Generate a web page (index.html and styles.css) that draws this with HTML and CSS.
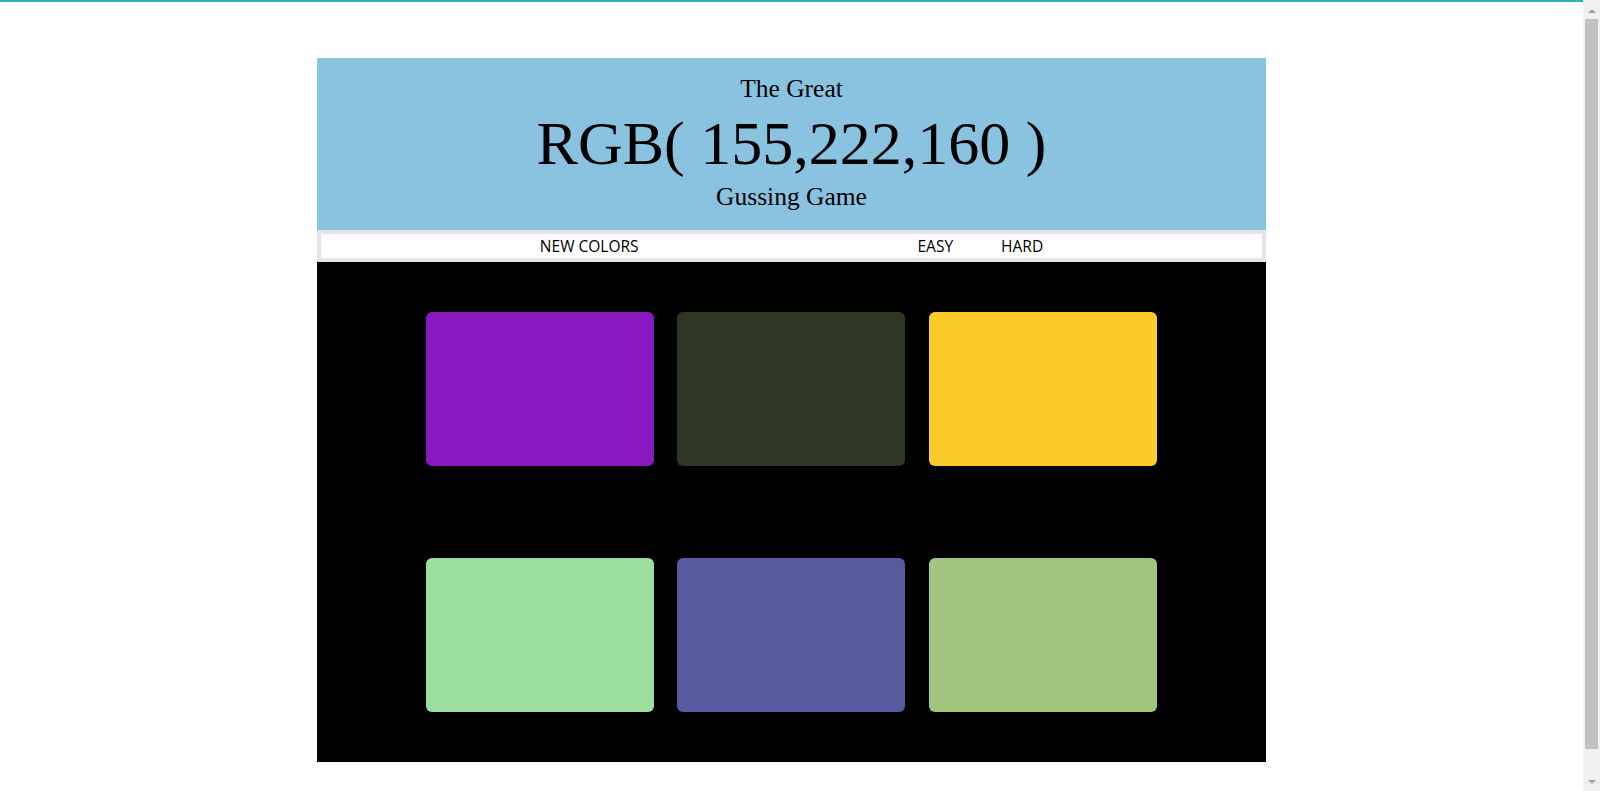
FILE: index.html
```html
<!DOCTYPE html>
<html lang="en">
<head>
<meta charset="utf-8">
<title>The Great RGB Gussing Game</title>
<link rel="stylesheet" href="styles.css">
</head>
<body>
<div class="game">
  <h1 class="header">
    <span class="line-small top">The Great</span>
    <span class="line-big">RGB( 155,222,160 )</span>
    <span class="line-small bottom">Gussing Game</span>
  </h1>
  <div class="stripe">
    <div class="stripe-group">
      <button class="btn">NEW COLORS</button>
      <span class="message"></span>
      <button class="btn">EASY</button>
      <button class="btn">HARD</button>
    </div>
  </div>
  <div class="board">
    <div class="square sq-purple"></div>
    <div class="square sq-dark"></div>
    <div class="square sq-yellow"></div>
    <div class="square sq-light"></div>
    <div class="square sq-indigo"></div>
    <div class="square sq-olive"></div>
  </div>
</div>
<div class="scrollbar" aria-hidden="true">
  <span class="arrow arrow-up"></span>
  <span class="thumb"></span>
  <span class="arrow arrow-down"></span>
</div>
</body>
</html>
```

FILE: styles.css
```css
html, body {
  margin: 0;
  padding: 0;
  background: #ffffff;
}
body {
  border-top: 2px solid #2bb3b8;
  margin-right: 17px;
}
.game {
  width: 60%;
  margin: 56px auto 58px;
}
.header {
  margin: 0;
  height: 172px;
  box-sizing: border-box;
  padding-top: 16px;
  background: #8ac3e0;
  color: #000;
  font-family: "Liberation Serif", "Times New Roman", serif;
  font-weight: normal;
  text-align: center;
}
.line-small {
  display: block;
  font-size: 25.5px;
  line-height: 30px;
}
.line-big {
  display: block;
  font-size: 62px;
  line-height: 79px;
}
.line-small.bottom {
  line-height: 27px;
}
.stripe {
  border: 4px solid #e4e4e9;
  background: #ffffff;
  height: 24px;
  display: flex;
  justify-content: center;
}
.stripe-group {
  display: flex;
  align-items: center;
}
.btn {
  border: none;
  background: none;
  padding: 0 24px;
  margin: 0;
  font-family: "Open Sans", "Noto Sans", sans-serif;
  font-size: 15.5px;
  line-height: 24px;
  color: #000;
  cursor: pointer;
}
.message {
  display: block;
  width: 231px;
}
.board {
  background: #000000;
  height: 500px;
  box-sizing: border-box;
  padding-top: 50px;
  display: grid;
  grid-template-columns: repeat(3, 228px);
  grid-auto-rows: 154px;
  column-gap: 23.5px;
  row-gap: 92px;
  justify-content: center;
}
.square {
  border-radius: 6px;
}
.sq-purple { background: #8819c1; }
.sq-dark { background: #2e3624; }
.sq-yellow { background: #fbcb29; }
.sq-light { background: #9bdea0; }
.sq-indigo { background: #575a9e; }
.sq-olive { background: #a1c47f; }

/* imitation of the browser's vertical scrollbar */
.scrollbar {
  position: fixed;
  top: 0;
  right: 0;
  width: 17px;
  height: 100%;
  background: #f1f1f1;
  display: flex;
  flex-direction: column;
  align-items: center;
}
.arrow {
  width: 0;
  height: 0;
  border-left: 4px solid transparent;
  border-right: 4px solid transparent;
}
.arrow-up {
  margin-top: 9px;
  border-bottom: 4px solid #a3a3a3;
}
.arrow-down {
  margin-top: 31px;
  border-top: 4px solid #a3a3a3;
}
.thumb {
  width: 13px;
  height: 730px;
  margin-top: 6px;
  background: #c1c1c1;
}
```
